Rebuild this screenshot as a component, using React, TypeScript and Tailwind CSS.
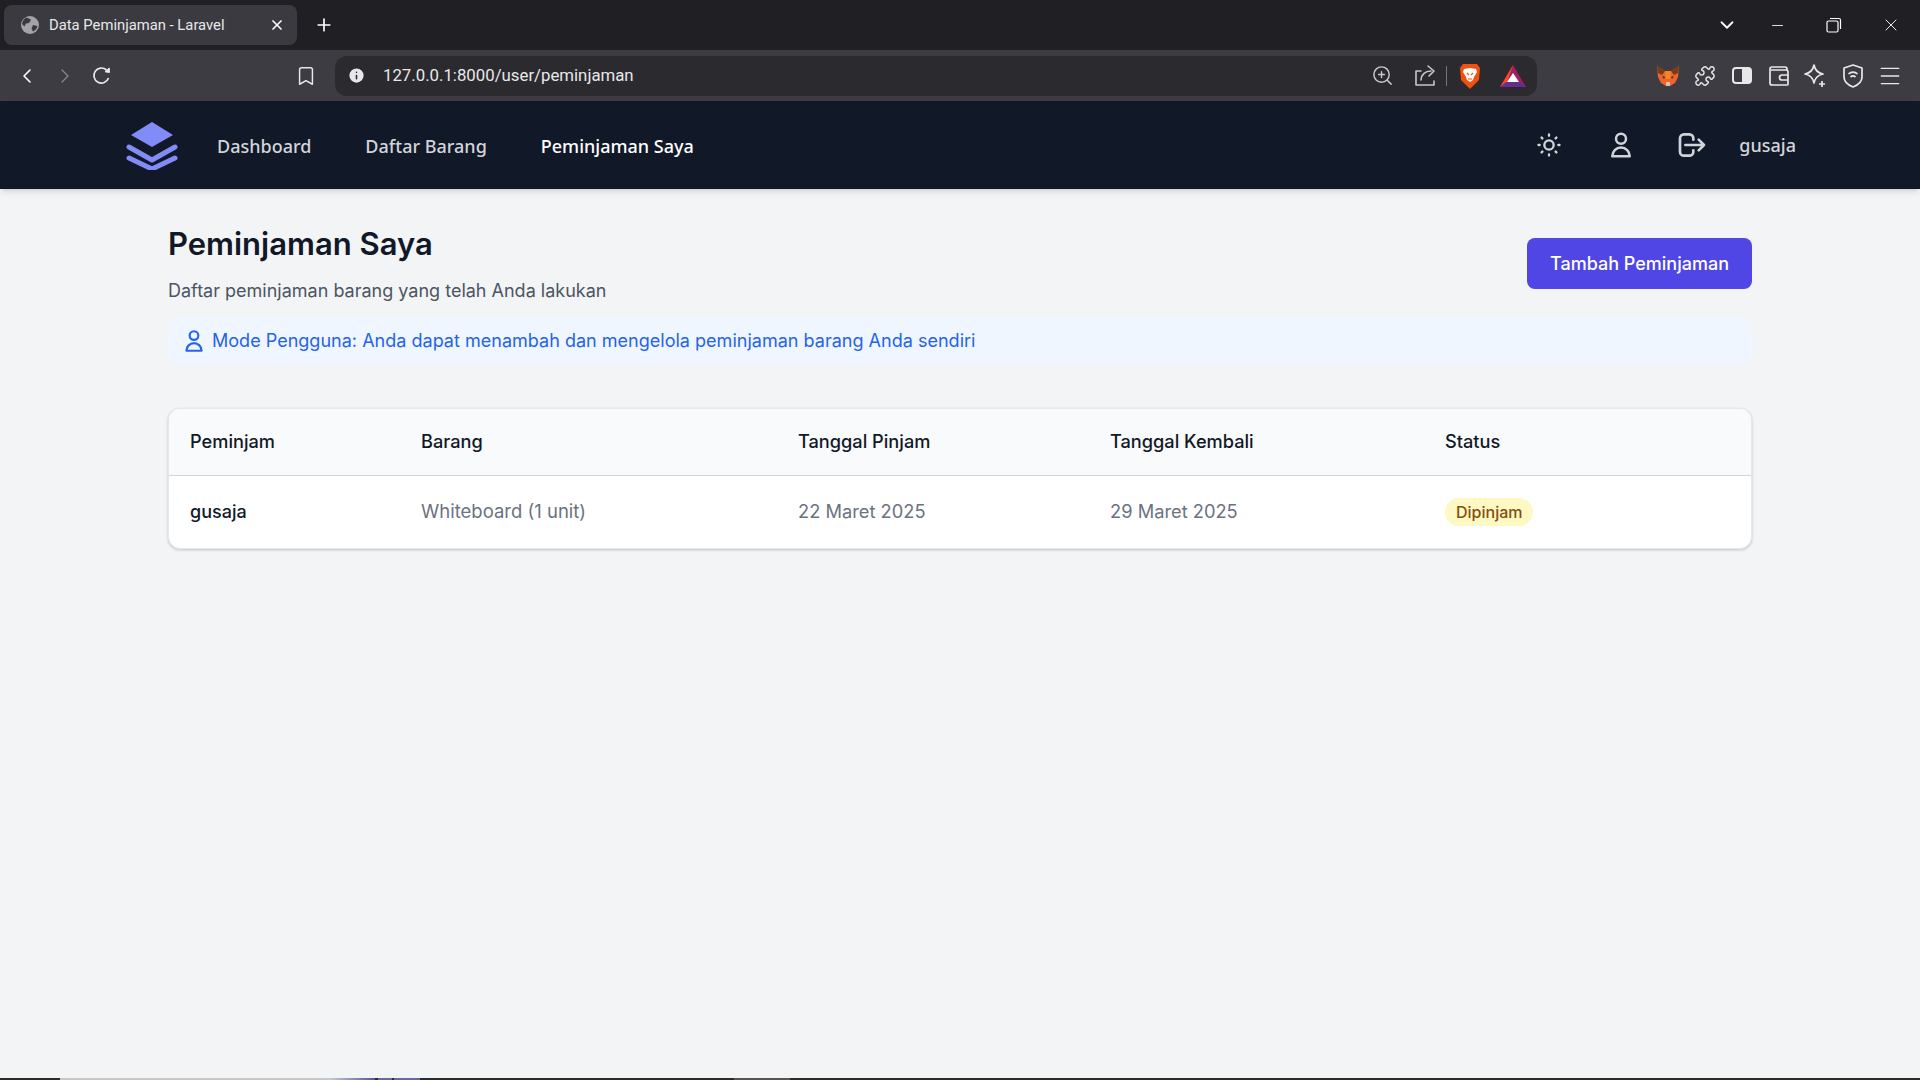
import { ChevronDown, ChevronLeft, ChevronRight, Info, Minus, Plus, Bookmark, X, ZoomIn, Puzzle, Menu } from "lucide-react"
import { HiOutlineLogout, HiOutlineSun, HiOutlineUser } from "react-icons/hi"

const pageFont = "[font-family:Inter,'Liberation_Sans',sans-serif]"

function TabGlobe() {
  return (
    <svg width="20" height="20" viewBox="0 0 20 20">
      <circle cx="10" cy="10" r="9" fill="#a3a3a8" />
      <path d="M6 2.500c2 .5 4 1 5 2.500l-2 3-3 .5-1.500 3L2 9c.5-3 2-5 4-6.500z" fill="#3a3a40" />
      <path d="M13 10l4.500 1c-.5 2.500-2 4.500-4.500 5.500l-1.500-3z" fill="#3a3a40" />
    </svg>
  )
}

function ReloadIcon() {
  return (
    <svg width="22" height="22" viewBox="0 0 22 22" fill="none" stroke="#e8e8ea" strokeWidth="1.7">
      <path d="M17.500 13a7.500 7.500 0 1 1-2-8" />
      <path d="M14 6.800l4.500.7-.3-4.500z" fill="#e8e8ea" strokeWidth="1" />
    </svg>
  )
}

function ShareIcon() {
  return (
    <svg width="24" height="24" viewBox="0 0 24 24" fill="none" stroke="#c8c8cc" strokeWidth="1.6" strokeLinecap="round" strokeLinejoin="round">
      <path d="M8 7H3v14h18v-4" />
      <path d="M8 16c0-5 4-9 10-9" />
      <path d="M15 2l6 5-5 5" />
    </svg>
  )
}

function WalletIcon() {
  return (
    <svg width="22" height="22" viewBox="0 0 22 22" fill="none" stroke="#e8e8ea" strokeWidth="1.7" strokeLinejoin="round">
      <path d="M19 5V4a2 2 0 0 0-2-2H4a2 2 0 0 0-2 2v14a2 2 0 0 0 2 2h15a1 1 0 0 0 1-1V7a2 2 0 0 0-2-2H3" />
      <path d="M20 10h-6a2 2 0 0 0 0 5h6" />
    </svg>
  )
}

function BraveIcon() {
  return (
    <svg width="22" height="26" viewBox="0 0 22 26">
      <path d="M4 1h14l3 4-1 12-9 9-9-9L1 5z" fill="#f2500f" />
      <path d="M5 6l6-1 6 1 1 3-3 5-1 3-3 2-3-2-1-3-3-5z" fill="#fff" />
      <path d="M8 10l2 2M14 10l-2 2M9 16h4" stroke="#f2500f" strokeWidth="1.2" />
    </svg>
  )
}

function BatIcon() {
  return (
    <svg width="26" height="22" viewBox="0 0 26 22">
      <polygon points="13,0 26,22 0,22" fill="#9e1f63" />
      <polygon points="13,0 0,22 7,18" fill="#ff4724" />
      <polygon points="0,22 26,22 20,17 6,17" fill="#662d91" />
      <polygon points="13,8 19,17 7,17" fill="#fff" />
    </svg>
  )
}

function FoxIcon() {
  return (
    <svg width="22" height="22" viewBox="0 0 22 22">
      <polygon points="0,1 8,6 14,6 22,1 21,12 18,18 13,21 9,21 4,18 1,12" fill="#f0642c" />
      <polygon points="0,1 8,6 5,10 1,8" fill="#763d16" />
      <polygon points="22,1 14,6 17,10 21,8" fill="#763d16" />
      <polygon points="8,6 14,6 13,14 9,14" fill="#f6851b" />
      <polygon points="9,17 13,17 13,21 9,21" fill="#d7c1b3" />
      <polygon points="5,11 8,12 7,14" fill="#233447" />
      <polygon points="17,11 14,12 15,14" fill="#233447" />
    </svg>
  )
}

function Logo() {
  return (
    <svg width="52" height="50" viewBox="0 0 52 50">
      <polygon points="26,2 47,15 26,27 5,15" fill="#818cf8" />
      <path d="M3 27l23 13 23-13M3 38l23 11 23-11" fill="none" stroke="#818cf8" strokeWidth="5" strokeLinecap="round" strokeLinejoin="round" />
    </svg>
  )
}

function BrowserChrome() {
  return (
    <div className="font-['Roboto',sans-serif] text-white">
      <div className="flex h-[50px] items-center bg-[#202024] pl-1">
        <div className="flex h-10 w-[293px] items-center rounded-lg bg-[#3a3a40] pl-4 pr-3">
          <TabGlobe />
          <span className="ml-[9px] flex-1 text-[14.8px] text-[#e8e8ea]">Data Peminjaman - Laravel</span>
          <X size={16} strokeWidth={2.5} />
        </div>
        <Plus size={20} className="ml-[17px]" />
        <div className="ml-auto flex items-center">
          <ChevronDown size={22} />
          <Minus size={17} strokeWidth={1.2} className="ml-[31px]" />
          <svg width="16" height="16" viewBox="0 0 16 16" fill="none" stroke="#fff" strokeWidth="1.2" className="ml-[40px]">
            <rect x="1" y="4" width="11" height="11" rx="1.500" />
            <path d="M4 1.500h9a1.500 1.500 0 0 1 1.500 1.500v9" />
          </svg>
          <X size={20} strokeWidth={1.1} className="ml-[39px] mr-[19px]" />
        </div>
      </div>
      <div className="flex h-[51px] items-center bg-[#3c3c42] pl-[15px]">
        <ChevronLeft size={24} strokeWidth={1.6} />
        <ChevronRight size={24} strokeWidth={1.4} className="ml-[14px] text-[#85858a]" />
        <div className="ml-[14px] flex"><ReloadIcon /></div>
        <Bookmark size={22} strokeWidth={1.6} className="ml-[182px] text-[#e8e8ea]" />
        <div className="ml-[18px] flex h-10 w-[1202px] items-center rounded-xl bg-[#2a2a2f] pl-3 pr-[11px]">
          <Info size={19} fill="#e8e8ea" stroke="#2a2a2f" />
          <span className="ml-[17px] flex-1 text-[16.8px] text-[#e8e8ea]">127.0.0.1:8000/user/peminjaman</span>
          <ZoomIn size={23} strokeWidth={1.5} className="text-[#c8c8cc]" />
          <div className="ml-[19px] flex"><ShareIcon /></div>
          <div className="ml-[9px] h-5 w-px bg-[#77777c]" />
          <div className="ml-[12px] flex"><BraveIcon /></div>
          <div className="ml-[19px] flex"><BatIcon /></div>
        </div>
        <div className="ml-[120px] flex"><FoxIcon /></div>
        <Puzzle size={22} strokeWidth={1.6} className="ml-[15px] text-[#e8e8ea]" />
        <div className="ml-[16px] flex h-[17px] w-[20px] rounded-sm border-2 border-[#e8e8ea]">
          <div className="ml-auto h-full w-[8px] bg-[#e8e8ea]" />
        </div>
        <div className="ml-[16px] flex"><WalletIcon /></div>
        <svg width="24" height="24" viewBox="0 0 24 24" fill="none" stroke="#e8e8ea" strokeWidth="1.7" className="ml-[13px]">
          <path d="M11 1c1 5 3.500 8 9 9-5.500 1-8 4-9 9-1-5-3.500-8-9-9 5.500-1 8-4 9-9z" strokeLinejoin="round" />
          <path d="M19 17v6M16 20h6" />
        </svg>
        <svg width="22" height="26" viewBox="0 0 22 26" fill="none" stroke="#e8e8ea" strokeWidth="1.7" className="ml-[15px]">
          <path d="M11 2l9 3v9c0 5-4 8-9 10-5-2-9-5-9-10V5z" strokeLinejoin="round" />
          <path d="M6.500 11c2.500-2.500 6.500-2.500 9 0M8.500 14c1.500-1.300 3.500-1.300 5 0M11 17h.01" />
        </svg>
        <Menu size={26} strokeWidth={1.3} className="ml-[13px] text-[#e8e8ea]" />
      </div>
    </div>
  )
}

function Navbar() {
  return (
    <nav className="relative z-10 flex h-[88px] items-center bg-[#111827] pl-[126px] pr-[124px] shadow-md">
      <Logo />
      <div className="ml-[39px] mt-[1px] flex items-center gap-[54px] text-lg font-medium">
        <a className="text-[#d1d5db]">Dashboard</a>
        <a className="text-[#d1d5db]">Daftar Barang</a>
        <a className="text-white">Peminjaman Saya</a>
      </div>
      <div className="ml-auto flex items-center text-[#d1d5db]">
        <HiOutlineSun size={28} />
        <HiOutlineUser size={30} className="ml-[43px]" />
        <HiOutlineLogout size={32} className="ml-[40px]" />
        <span className="ml-[31px] text-lg font-medium">gusaja</span>
      </div>
    </nav>
  )
}

function BorrowTable() {
  return (
    <div className="mt-[43px] overflow-hidden rounded-xl border border-[#e5e7eb] bg-white shadow-[0_1px_3px_rgba(0,0,0,0.2)]">
      <table className="w-full table-fixed text-left text-[18.5px]">
        <thead className="border-b border-[#d1d5db] bg-[#f9fafb] text-[18.2px] text-[#111827]">
          <tr className="h-[66px]">
            <th className="w-[230px] pl-[21px] font-medium">Peminjam</th>
            <th className="w-[377px] pl-[22px] font-medium">Barang</th>
            <th className="w-[312px] pl-[22px] font-medium">Tanggal Pinjam</th>
            <th className="w-[334px] pl-[22px] font-medium">Tanggal Kembali</th>
            <th className="pl-[23px] font-medium">Status</th>
          </tr>
        </thead>
        <tbody>
          <tr className="h-[73px]">
            <td className="pl-[21px] text-[18px] font-medium text-[#111827]">gusaja</td>
            <td className="pl-[22px] text-[#6b7280]">Whiteboard (1 unit)</td>
            <td className="pl-[22px] text-[18.3px] text-[#6b7280]">22 Maret 2025</td>
            <td className="pl-[22px] text-[18.3px] text-[#6b7280]">29 Maret 2025</td>
            <td className="pl-[23px]">
              <span className="inline-flex h-7 items-center rounded-full bg-[#fef9c3] px-[11px] text-[16px] font-medium text-[#854d0e]">Dipinjam</span>
            </td>
          </tr>
        </tbody>
      </table>
    </div>
  )
}

export default function App() {
  return (
    <div className="flex h-screen flex-col overflow-hidden bg-[#f3f4f6]">
      <BrowserChrome />
      <Navbar />
      <main className={`${pageFont} flex-1 px-[168px] pt-[33px]`}>
        <div className="flex items-start justify-between">
          <div>
            <h1 className="text-[31px] leading-[44px] font-semibold text-[#111827]">Peminjaman Saya</h1>
            <p className="mt-[11px] text-lg leading-7 text-[#4b5563]">Daftar peminjaman barang yang telah Anda lakukan</p>
          </div>
          <button className="mt-[16px] h-[51px] w-[225px] rounded-lg bg-[#4f46e5] text-lg font-medium text-white">Tambah Peminjaman</button>
        </div>
        <div className="mt-[12px] flex h-12 items-center rounded-lg bg-[#eff6ff] pl-[13px] text-[18.05px] text-[#2563eb]">
          <HiOutlineUser size={26} />
          <span className="ml-[5px]">Mode Pengguna: Anda dapat menambah dan mengelola peminjaman barang Anda sendiri</span>
        </div>
        <BorrowTable />
      </main>
      <div className="flex h-[2px] bg-[#2b2b2b]">
        <div className="ml-[60px] w-[270px] bg-[#c8c8c8]" />
        <div className="w-[45px] bg-gradient-to-r from-[#c8c8c8] to-[#5b54a8]" />
        <div className="ml-[3px] w-[14px] bg-[#6a64a8]" />
        <div className="ml-[2px] w-[26px] bg-[#6a64a8]" />
        <div className="ml-[314px] w-[56px] bg-[#555555]" />
      </div>
    </div>
  )
}
